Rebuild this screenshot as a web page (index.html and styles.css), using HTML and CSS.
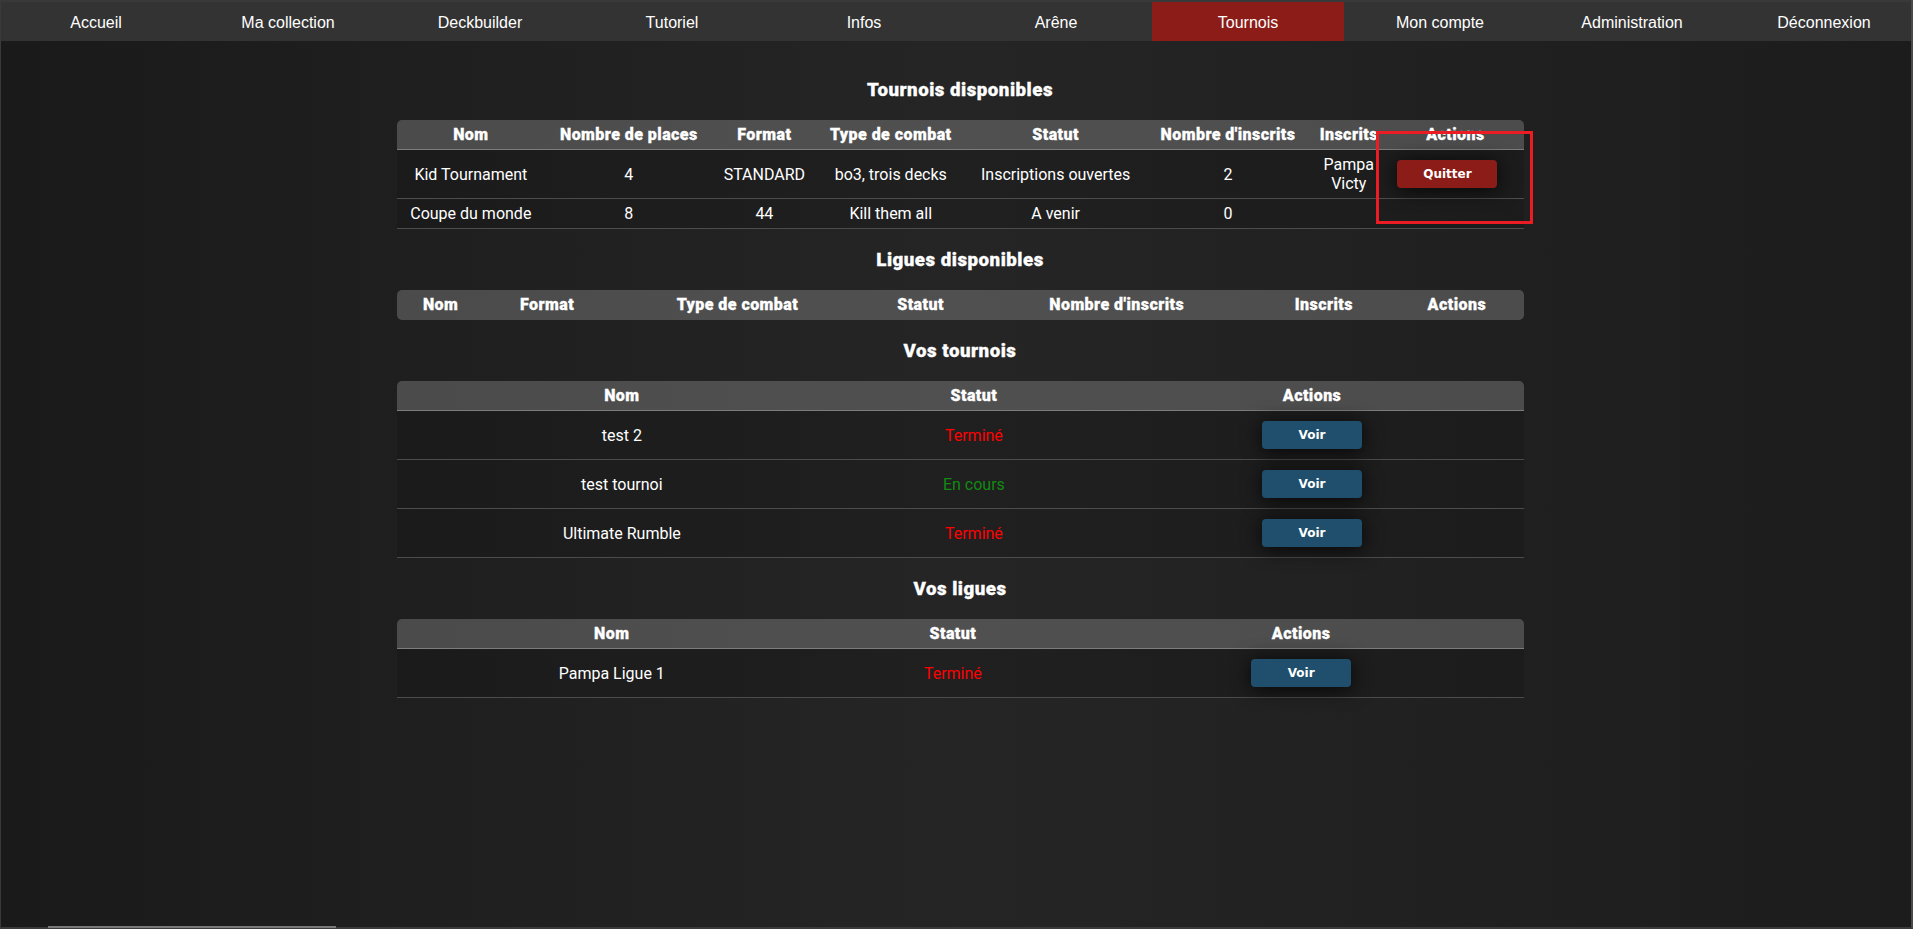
FILE: index.html
```html
<!DOCTYPE html>
<html lang="fr">
<head>
<meta charset="utf-8">
<title>Tournois</title>
<link rel="stylesheet" href="styles.css">
</head>
<body>
<div class="page">
  <nav class="topnav">
    <a class="nav-item" href="#">Accueil</a>
    <a class="nav-item" href="#">Ma collection</a>
    <a class="nav-item" href="#">Deckbuilder</a>
    <a class="nav-item" href="#">Tutoriel</a>
    <a class="nav-item" href="#">Infos</a>
    <a class="nav-item" href="#">Arêne</a>
    <a class="nav-item active" href="#">Tournois</a>
    <a class="nav-item" href="#">Mon compte</a>
    <a class="nav-item" href="#">Administration</a>
    <a class="nav-item" href="#">Déconnexion</a>
  </nav>

  <main class="content">
    <h3 class="section-title">Tournois disponibles</h3>
    <div class="table-wrap">
      <table class="data-table">
        <thead>
          <tr>
            <th>Nom</th><th>Nombre de places</th><th>Format</th><th>Type de combat</th><th>Statut</th><th>Nombre d'inscrits</th><th>Inscrits</th><th>Actions</th>
          </tr>
        </thead>
        <tbody>
          <tr>
            <td>Kid Tournament</td><td>4</td><td>STANDARD</td><td>bo3, trois decks</td><td>Inscriptions ouvertes</td><td>2</td><td>Pampa<br>Victy</td><td class="cell-left"><button class="btn btn-quit">Quitter</button></td>
          </tr>
          <tr>
            <td>Coupe du monde</td><td>8</td><td>44</td><td>Kill them all</td><td>A venir</td><td>0</td><td></td><td></td>
          </tr>
        </tbody>
      </table>
      <div class="highlight"></div>
    </div>

    <h3 class="section-title">Ligues disponibles</h3>
    <div class="table-wrap">
      <table class="data-table empty">
        <thead>
          <tr>
            <th>Nom</th><th>Format</th><th>Type de combat</th><th>Statut</th><th>Nombre d'inscrits</th><th>Inscrits</th><th>Actions</th>
          </tr>
        </thead>
      </table>
    </div>

    <h3 class="section-title">Vos tournois</h3>
    <div class="table-wrap">
      <table class="data-table">
        <thead>
          <tr><th>Nom</th><th>Statut</th><th>Actions</th></tr>
        </thead>
        <tbody>
          <tr><td>test 2</td><td class="st-done">Terminé</td><td><button class="btn btn-view">Voir</button></td></tr>
          <tr><td>test tournoi</td><td class="st-live">En cours</td><td><button class="btn btn-view">Voir</button></td></tr>
          <tr><td>Ultimate Rumble</td><td class="st-done">Terminé</td><td><button class="btn btn-view">Voir</button></td></tr>
        </tbody>
      </table>
    </div>

    <h3 class="section-title">Vos ligues</h3>
    <div class="table-wrap">
      <table class="data-table">
        <thead>
          <tr><th>Nom</th><th>Statut</th><th>Actions</th></tr>
        </thead>
        <tbody>
          <tr><td>Pampa Ligue 1</td><td class="st-done">Terminé</td><td><button class="btn btn-view">Voir</button></td></tr>
        </tbody>
      </table>
    </div>
  </main>
</div>

<div class="frame"></div>
<div class="scroll-thumb"></div>
</body>
</html>
```
FILE: styles.css
```css
html, body {
  margin: 0;
  padding: 0;
}

html {
  overflow: hidden;
}

body {
  min-height: 100vh;
  background: linear-gradient(to right, #1a1a1a 0%, #252525 50%, #1c1c1c 100%);
  color: #fff;
  font-family: Roboto, "Liberation Sans", sans-serif;
}

.page {
  width: 1920px;
}

.topnav {
  display: grid;
  grid-template-columns: repeat(10, 1fr);
  height: 39px;
  border-top: 2px solid #393939;
  background: #333333;
}

.nav-item {
  display: flex;
  align-items: center;
  justify-content: center;
  color: #fff;
  text-decoration: none;
  font-family: "Liberation Sans", Arial, sans-serif;
  font-size: 16px;
  padding-top: 2px;
}

.nav-item.active {
  background: #8b1c17;
}

.content {
  width: 1127px;
  margin: 0 auto;
  padding: 18px 0 40px;
}

.section-title {
  margin: 20px 0 19px;
  text-align: center;
  font-size: 18.72px;
  font-weight: 900;
  line-height: 22px;
  letter-spacing: 0.5px;
  -webkit-text-stroke: 0.3px #fff;
}

.table-wrap {
  position: relative;
}

.data-table {
  width: 100%;
  border-collapse: separate;
  border-spacing: 0;
  font-size: 16px;
  text-align: center;
}

.data-table th {
  background: rgba(255, 255, 255, 0.2);
  font-weight: 900;
  padding: 5px;
  border-bottom: 1px solid #7c7c7c;
  white-space: nowrap;
  letter-spacing: 0.45px;
  -webkit-text-stroke: 0.3px #fff;
}

.data-table th:first-child { border-top-left-radius: 5px; }
.data-table th:last-child { border-top-right-radius: 5px; }

.data-table.empty th { border-bottom-color: transparent; }
.data-table.empty th:first-child { border-bottom-left-radius: 5px; }
.data-table.empty th:last-child { border-bottom-right-radius: 5px; }

.data-table td {
  padding: 5px;
  border-bottom: 1px solid #4c4c4c;
  background: rgba(0, 0, 0, 0.12);
  white-space: nowrap;
}

.data-table td.cell-left {
  text-align: left;
}

.st-done { color: #ff0000; }
.st-live { color: #118a11; }

.btn {
  display: inline-block;
  vertical-align: middle;
  width: 100px;
  height: 28px;
  margin: 5px;
  border: none;
  border-radius: 4px;
  color: #fff;
  font-family: "DejaVu Sans", Verdana, sans-serif;
  font-weight: bold;
  font-size: 12px;
  box-shadow: 0 2px 20px rgba(0, 0, 0, 0.8);
  cursor: pointer;
}

.btn-quit { background: #8b1c17; }
.btn-view { background: #1f4f6c; }

.highlight {
  position: absolute;
  left: 979px;
  top: 11px;
  width: 157px;
  height: 93px;
  box-sizing: border-box;
  border: 3px solid #ec1c24;
  pointer-events: none;
}

.frame {
  position: fixed;
  inset: 0;
  border-left: 1px solid #3a3a3a;
  border-right: 2px solid #4a4a4a;
  border-bottom: 2px solid #3a3a3a;
  pointer-events: none;
}

.scroll-thumb {
  position: fixed;
  left: 48px;
  bottom: 1px;
  width: 288px;
  height: 2px;
  background: #7a7a7a;
  pointer-events: none;
}
```
